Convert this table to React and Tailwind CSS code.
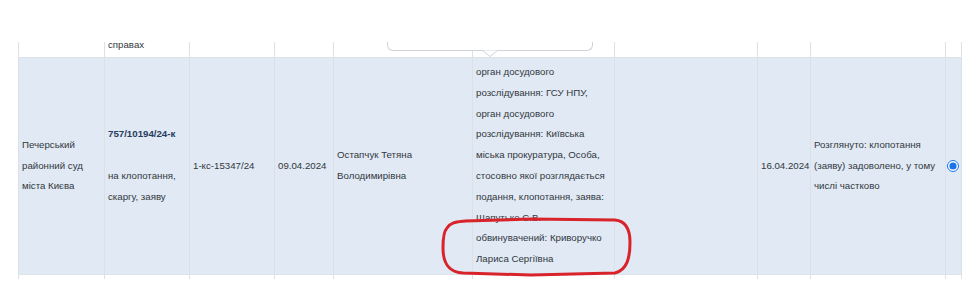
const cols =
  "grid grid-cols-[86px_85px_85px_59px_139px_142px_143px_53px_135px_17px]";

function Cell({ children, className = "" }) {
  return (
    <div
      className={`border-l border-[#dce1e7] px-[3px] py-1 flex items-center leading-[20.8px] whitespace-nowrap ${className}`}
    >
      <div>{children}</div>
    </div>
  );
}

export default function App() {
  return (
    <div className="relative w-[974px] h-[290px] overflow-hidden bg-white text-[9.7px] text-[#33373d] font-['Liberation_Sans',Arial,sans-serif]">
      <div className="h-[42px]" />

      <div className="ml-[18px] w-[944px]">
        {/* tail of the previous row */}
        <div className={`${cols} grid-rows-[15px] h-[15px] overflow-hidden border-r border-[#dce1e7]`}>
          {Array.from({ length: 10 }).map((_, i) => (
            <div
              key={i}
              className="border-l border-[#dce1e7] px-[3px] pb-[2px] flex items-end leading-[21px] min-h-0"
            >
              {i === 1 ? <span className="shrink-0">справах</span> : null}
            </div>
          ))}
        </div>

        {/* selected row */}
        <div className={`${cols} bg-[#e0e9f4] border-t border-[#d6dde6] border-r border-[#dce1e7]`}>
          <Cell>
            Печерський
            <br />
            районний суд
            <br />
            міста Києва
          </Cell>
          <Cell>
            <span className="font-semibold text-[#263d5e]">757/10194/24-к</span>
            <br />
            <br />
            на клопотання,
            <br />
            скаргу, заяву
          </Cell>
          <Cell>1-кс-15347/24</Cell>
          <Cell>09.04.2024</Cell>
          <Cell>
            Остапчук Тетяна
            <br />
            Володимирівна
          </Cell>
          <Cell>
            орган досудового
            <br />
            розслідування: ГСУ НПУ,
            <br />
            орган досудового
            <br />
            розслідування: Київська
            <br />
            міська прокуратура, Особа,
            <br />
            стосовно якої розглядається
            <br />
            подання, клопотання, заява:
            <br />
            Шапутько С.В.
            <br />
            обвинувачений: Криворучко
            <br />
            Лариса Сергіївна
          </Cell>
          <Cell />
          <Cell>16.04.2024</Cell>
          <Cell>
            Розглянуто: клопотання
            <br />
            (заяву) задоволено, у тому
            <br />
            числі частково
          </Cell>
          <div className="border-l border-[#dce1e7] flex items-center justify-center">
            <input
              type="radio"
              defaultChecked
              className="m-0 mr-[2px] w-[12px] h-[12px] accent-[#1a73e8]"
            />
          </div>
        </div>

        {/* start of the next row */}
        <div className={`${cols} h-[5px] border-t border-[#dfe4ea] border-r border-[#dce1e7]`}>
          {Array.from({ length: 10 }).map((_, i) => (
            <div key={i} className="border-l border-[#dce1e7]" />
          ))}
        </div>
      </div>

      {/* popover edge above the row */}
      <div className="absolute left-[387px] top-[42px] w-[206px] h-[9px] bg-white border-x border-b border-[#cfd4da] rounded-b-[6px]" />
      <svg
        className="absolute left-[482px] top-[50px]"
        width="16"
        height="8"
        viewBox="0 0 16 8"
      >
        <path d="M0.5 0.5 L8 6.5 L15.5 0.5" fill="#ffffff" stroke="#cfd4da" strokeWidth="1" />
      </svg>

      {/* red marker annotation */}
      <svg
        className="absolute left-[441px] top-[216px]"
        width="192"
        height="62"
        viewBox="0 0 192 62"
        fill="none"
      >
        <path
          d="M6 12 C10 6 16 6 24 5 L90 3 L174 4 C184 5 189 12 189 26 C189 42 186 54 174 57 L90 59 L22 57 C8 56 2 48 2 32 C2 20 3 15 6 12 Z"
          stroke="#d8232a"
          strokeWidth="3"
          strokeLinejoin="round"
        />
      </svg>
    </div>
  );
}
